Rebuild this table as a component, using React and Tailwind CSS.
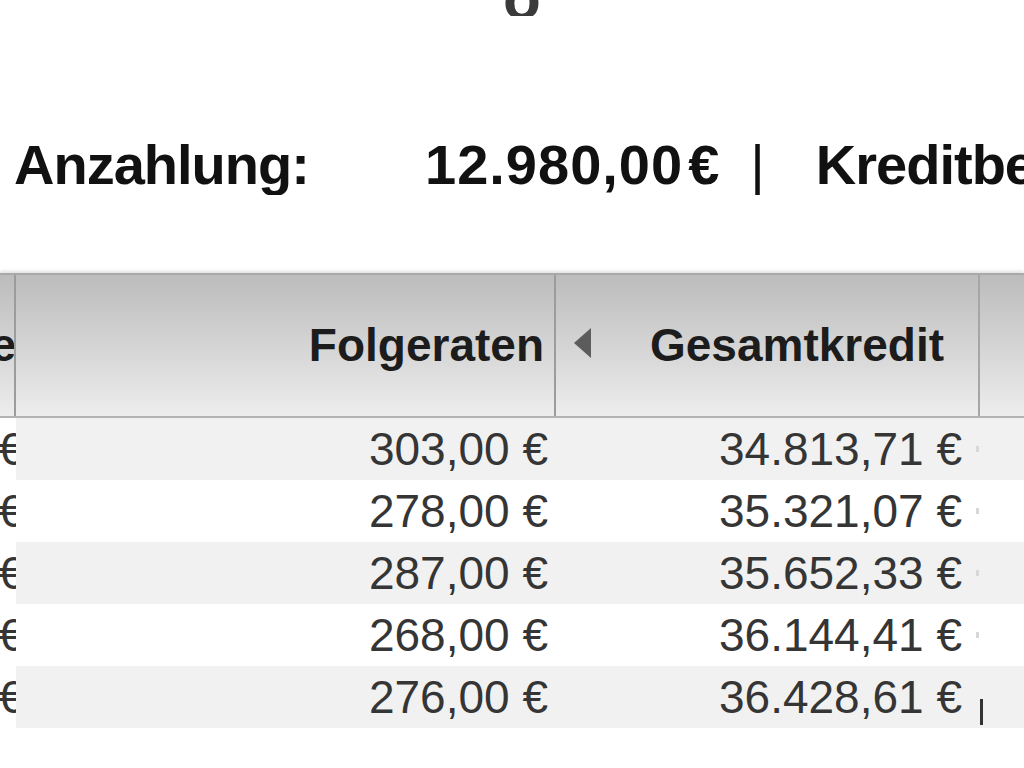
const rows = [
  { rate: "303,00 €", total: "34.813,71 €" },
  { rate: "278,00 €", total: "35.321,07 €" },
  { rate: "287,00 €", total: "35.652,33 €" },
  { rate: "268,00 €", total: "36.144,41 €" },
  { rate: "276,00 €", total: "36.428,61 €" },
];

export default function App() {
  return (
    <div
      className="w-[1024px] h-[768px] overflow-hidden bg-white text-[#1a1a1a]"
      style={{ fontFamily: '"Liberation Sans", Arial, sans-serif' }}
    >
      {/* cut-off title glyph at the very top */}
      <div className="h-[16px] overflow-hidden flex justify-center">
        <div className="pl-[20px] -mt-[32px] text-[62px] leading-[60px] font-bold text-[#3a3a3a]">o</div>
      </div>

      {/* summary line */}
      <div className="mt-[119px] h-[60px] flex items-center whitespace-nowrap overflow-hidden text-[56px] font-bold tracking-[-1px] text-[#111]">
        <span className="pl-[14px] w-[425px] shrink-0">Anzahlung:</span>
        <span className="tracking-[1px]">12.980,00</span>
        <span className="ml-[5px]">€</span>
        <span className="ml-[32px] font-normal">|</span>
        <span className="ml-[52px]">Kreditbetrag:</span>
      </div>

      {/* table */}
      <div className="mt-[78px] shadow-[0_-2px_3px_rgba(0,0,0,0.12)]">
        <div className="h-[145px] flex border-t-2 border-b-2 border-t-[#a9a9a9] border-b-[#b3b3b3] bg-gradient-to-b from-[#bcbcbc] to-[#ededed] text-[46px] font-bold text-[#1c1c1c]">
          <div className="w-[16px] shrink-0 overflow-hidden flex items-center justify-end border-r-2 border-[#9c9c9c]">
            <span className="-mr-[2px]">e</span>
          </div>
          <div className="w-[540px] shrink-0 flex items-center justify-end pr-[10px] border-r-2 border-[#9c9c9c]">
            Folgeraten
          </div>
          <div className="w-[424px] shrink-0 flex items-center border-r-2 border-[#a6a6a6]">
            <span className="ml-[18px] -mt-[6px] w-0 h-0 border-y-[15px] border-y-transparent border-r-[17px] border-r-[#5c5c5c]" />
            <span className="ml-[59px]">Gesamtkredit</span>
          </div>
          <div className="flex-1" />
        </div>

        {rows.map((r, i) => (
          <div
            key={r.total}
            className={`h-[62px] flex text-[46px] text-[#353535] ${i % 2 === 0 ? "bg-[#f1f1f1]" : "bg-white"}`}
          >
            <div className="w-[16px] shrink-0 overflow-hidden flex items-center justify-end bg-white">
              <span className="-mr-[8px] whitespace-nowrap">€</span>
            </div>
            <div className="w-[540px] shrink-0 flex items-center justify-end pr-[8px] whitespace-nowrap">
              {r.rate}
            </div>
            <div className="w-[424px] shrink-0 flex items-center justify-end pr-[18px] whitespace-nowrap">
              {r.total}
            </div>
            <div className="flex-1 flex items-center">
              {i === rows.length - 1 ? (
                <span className="mt-[30px] w-[3px] h-[26px] bg-[#333]" />
              ) : (
                <span className="-ml-[4px] w-[3px] h-[6px] bg-[#d8d8d8]" />
              )}
            </div>
          </div>
        ))}
      </div>
    </div>
  );
}
